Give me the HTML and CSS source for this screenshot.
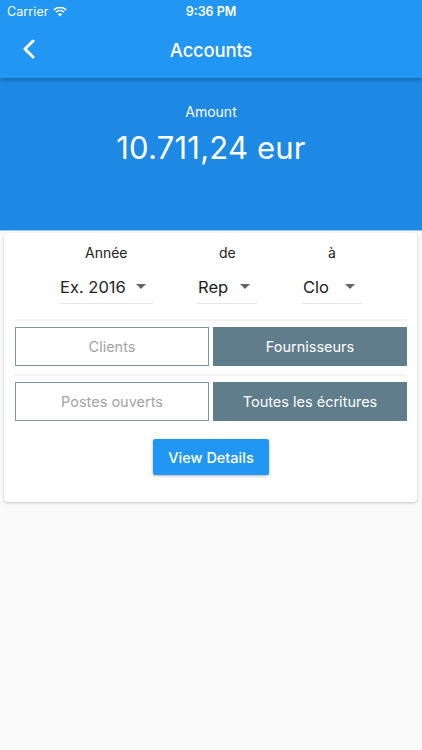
FILE: index.html
```html
<!DOCTYPE html>
<html>
<head>
<meta charset="utf-8">
<link rel="stylesheet" href="styles.css">
</head>
<body>
<div class="top">
  <div class="status">
    <div class="carrier">Carrier
      <svg class="wifi" width="14" height="10" viewBox="0 0 14 10"><path d="M7 9.6 L4.9 7.3 A3 3 0 0 1 9.1 7.3 Z" fill="#fff"/><path d="M2.9 5.2 A5.8 5.8 0 0 1 11.1 5.2" stroke="#fff" stroke-width="1.6" fill="none"/><path d="M0.8 3 A8.8 8.8 0 0 1 13.2 3" stroke="#fff" stroke-width="1.6" fill="none"/></svg>
    </div>
    <div class="time">9:36 PM</div>
  </div>
  <div class="appbar">
    <svg class="back" width="14" height="20" viewBox="0 0 14 20"><path d="M11 2 L3 10 L11 18" stroke="#fff" stroke-width="3" fill="none" stroke-linecap="round" stroke-linejoin="round"/></svg>
    <div class="title">Accounts</div>
  </div>
</div>
<div class="header">
  <div class="label">Amount</div>
  <div class="amount">10.711,24 eur</div>
</div>
<div class="card">
  <div class="selects">
    <div class="sel sel1">
      <div class="sel-label">Année</div>
      <div class="dropdown"><span>Ex. 2016</span><i class="caret"></i></div>
    </div>
    <div class="sel sel2">
      <div class="sel-label">de</div>
      <div class="dropdown"><span>Rep</span><i class="caret"></i></div>
    </div>
    <div class="sel sel3">
      <div class="sel-label">à</div>
      <div class="dropdown"><span>Clo</span><i class="caret"></i></div>
    </div>
  </div>
  <div class="divider"></div>
  <div class="toggles">
    <div class="tog">Clients</div>
    <div class="tog on">Fournisseurs</div>
  </div>
  <div class="divider"></div>
  <div class="toggles">
    <div class="tog">Postes ouverts</div>
    <div class="tog on">Toutes les écritures</div>
  </div>
  <div class="actions">
    <div class="btn">View Details</div>
  </div>
</div>
</body>
</html>
```

FILE: styles.css
```css
* { box-sizing: border-box; }
html, body { margin: 0; padding: 0; }
body {
  width: 422px;
  height: 750px;
  background: #fafafa;
  font-family: Inter, Roboto, "Noto Sans", sans-serif;
  overflow: hidden;
}
.top {
  background: #2196f3;
  color: #fff;
  position: relative;
  z-index: 2;
  box-shadow: 0 2px 4px rgba(0,0,0,0.25);
}
.status {
  height: 22px;
  display: flex;
  align-items: center;
  justify-content: center;
  position: relative;
  font-size: 12.5px;
}
.carrier {
  position: absolute;
  left: 7px;
  top: 4px;
  display: flex;
  align-items: center;
  gap: 4px;
  letter-spacing: 0.1px;
}
.time { font-weight: 600; }
.appbar {
  height: 56px;
  display: flex;
  align-items: center;
  justify-content: center;
  position: relative;
}
.back { position: absolute; left: 22px; top: 17px; }
.title { font-size: 18.5px; font-weight: 500; letter-spacing: -0.2px; }
.header {
  background: #1e88e5;
  color: #fff;
  height: 153px;
  border-bottom: 1px solid #90caf9;
  text-align: center;
  padding-top: 25px;
}
.label { font-size: 14px; line-height: 17px; }
.amount { font-size: 31px; line-height: 40px; margin-top: 8px; letter-spacing: 0.2px; }
.card {
  margin: 2px 5px 0 4px;
  background: #fff;
  border-radius: 4px;
  box-shadow: 0 1px 3px rgba(0,0,0,0.22);
  padding: 10px 10px 27px 11px;
}
.selects {
  display: grid;
  grid-template-columns: 182px 105px 1fr;
  padding-bottom: 15px;
}
.sel { display: flex; flex-direction: column; align-items: flex-start; }
.sel-label { font-size: 14px; color: #222; line-height: 20px; }
.sel1 { padding-left: 44px; }
.sel1 .sel-label { margin-left: 26px; }
.sel2 .sel-label { margin-left: 22px; }
.sel3 .sel-label { margin-left: 26px; }
.dropdown {
  margin-top: 7px;
  height: 34px;
  display: flex;
  align-items: center;
  border-bottom: 1px solid #e6e6e6;
  font-size: 16.5px;
  color: #222;
  padding-left: 1px;
}
.sel1 .dropdown { width: 94px; }
.sel2 .dropdown { width: 60px; }
.sel3 .dropdown { width: 60px; }
.dropdown span { flex: 1; }
.caret {
  width: 0; height: 0;
  border-left: 5px solid transparent;
  border-right: 5px solid transparent;
  border-top: 5px solid #666;
  margin-right: 7px;
}
.divider { height: 2px; background: #f3f3f3; }
.toggles {
  display: grid;
  grid-template-columns: 1fr 1fr;
  gap: 4px;
  padding: 6px 0 8px;
}
.tog {
  height: 39px;
  display: flex;
  align-items: center;
  justify-content: center;
  border: 1px solid #7e95a1;
  color: #a3a3a3;
  font-size: 14.5px;
}
.tog.on { background: #607d8b; color: #fff; border-color: #607d8b; }
.actions { display: flex; justify-content: center; padding-top: 10px; }
.btn {
  width: 116px;
  height: 36px;
  background: #2196f3;
  color: #fff;
  font-size: 14.5px;
  font-weight: 500;
  display: flex;
  align-items: center;
  justify-content: center;
  border-radius: 2px;
  box-shadow: 0 1px 3px rgba(0,0,0,0.3);
}
```
